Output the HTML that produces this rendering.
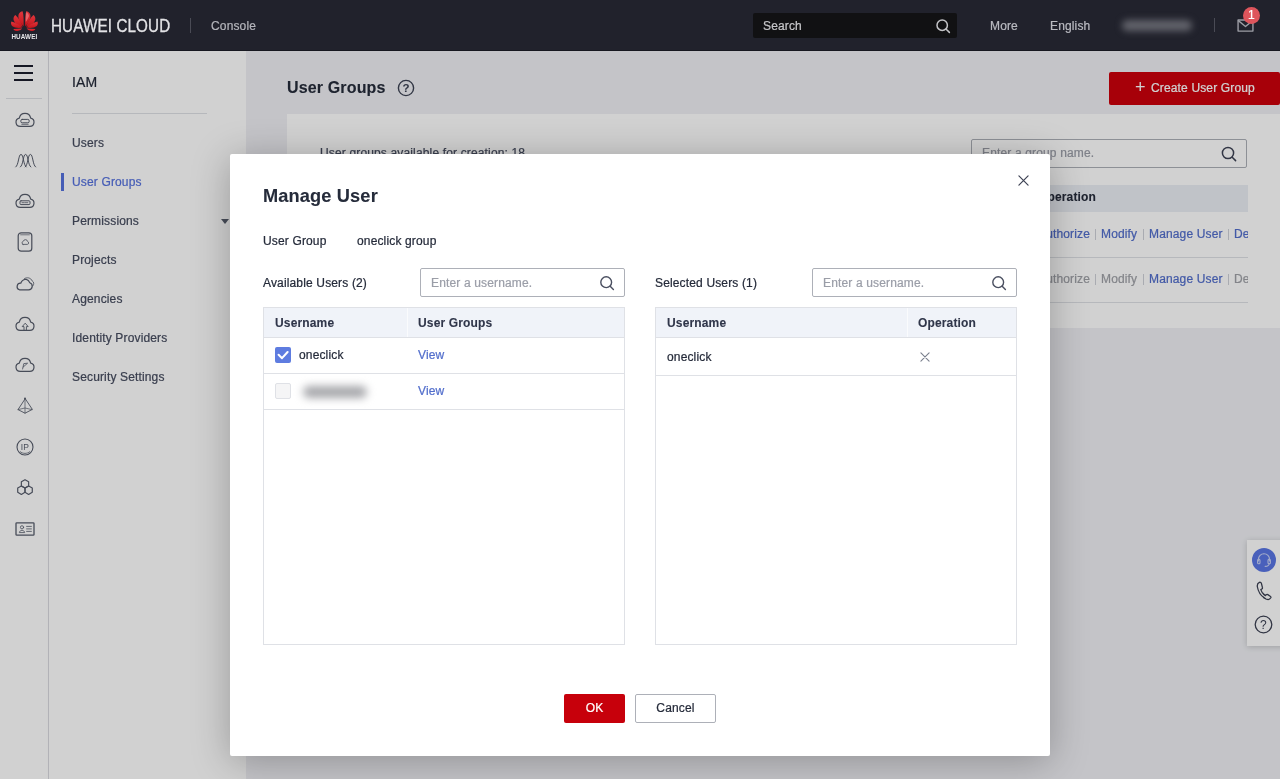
<!DOCTYPE html>
<html lang="en">
<head>
<meta charset="utf-8">
<title>IAM - User Groups</title>
<style>
*{box-sizing:border-box;margin:0;padding:0}
#rail,#side,#main,#modal,#topbar{-webkit-text-stroke:.22px currentColor}
b,h2,#ptitle{-webkit-text-stroke:.1px currentColor}
html,body{width:1280px;height:779px;overflow:hidden}
body{position:relative;font-family:"Liberation Sans",Arial,sans-serif;font-size:12px;letter-spacing:.15px;color:#252b3a;background:#eff0f4}
.abs{position:absolute}
/* ---------- top bar ---------- */
#topbar{position:absolute;left:0;top:0;width:1280px;height:51px;background:#21222c;z-index:80;border-bottom:1px solid #171820}
#topbar .brand{position:absolute;left:51px;top:16px;font-size:18px;line-height:20px;color:#e3e3e6;white-space:nowrap;transform-origin:0 50%;transform:scaleX(.845);-webkit-text-stroke:.3px #e3e3e6}
#topbar .vdiv{position:absolute;width:1px;background:#4a4b55}
#topbar .txt{position:absolute;font-size:12px;line-height:14px;color:#b9bac0}
#tsearch{position:absolute;left:753px;top:13px;width:204px;height:25px;background:#111113;border-radius:2px}
#tsearch span{position:absolute;left:10px;top:6px;font-size:12px;line-height:14px;color:#c6c6c9}
#tsearch svg{position:absolute;left:182px;top:5px}
.blur1{position:absolute;left:1122px;top:20px;width:70px;height:11px;border-radius:6px;background:#62636b;filter:blur(3.500px)}
#badge{position:absolute;left:1243px;top:7px;width:17px;height:17px;border-radius:9px;background:#de555c;color:#fff;font-size:12px;line-height:17px;text-align:center}
/* ---------- rail + sidebar ---------- */
#rail{position:absolute;left:0;top:50px;width:49px;height:729px;background:#fff;border-right:1px solid #dcdde3}
#rail .hb{position:absolute;left:14px;width:19px;height:2px;background:#1c1e2c}
#rail .sep{position:absolute;left:6px;top:48px;width:36px;height:1px;background:#dfe1e6}
#rail svg{position:absolute;left:13px;fill:none;stroke:#575d6c;stroke-width:1.2;stroke-linecap:round;stroke-linejoin:round}
#side{position:absolute;left:49px;top:50px;width:197px;height:729px;background:#fff;box-shadow:1px 0 3px rgba(0,0,0,.08)}
#side .ttl{position:absolute;left:23px;top:24px;font-size:14px;line-height:16px;color:#252b3a}
#side .sep{position:absolute;left:23px;top:63px;width:135px;height:1px;background:#dfe1e6}
#side .it{position:absolute;left:23px;font-size:12px;line-height:14px;color:#474d60}
#side .it.on{color:#5672de}
#side .bar{position:absolute;left:12px;top:123px;width:2.500px;height:18px;background:#5672de}
#side .caret{position:absolute;left:172px;top:169px;width:0;height:0;border-left:4px solid transparent;border-right:4px solid transparent;border-top:5px solid #575d6c}
/* ---------- main ---------- */
#main{position:absolute;left:246px;top:50px;width:1034px;height:729px;background:#eff0f4}
#ptitle{position:absolute;left:41px;top:28px;font-size:16px;font-weight:bold;line-height:20px;color:#252b3a}
#create{position:absolute;left:863px;top:21.500px;width:171px;height:33px;background:#cc000c;border-radius:2px;color:#fff;font-size:12px;line-height:33px;text-align:left}
#card{position:absolute;left:41px;top:64px;width:1000px;height:214px;background:#fff}
#card .note{position:absolute;left:33px;top:32px;font-size:12px;line-height:14px;color:#474d60;white-space:nowrap}
#gsearch{position:absolute;left:684px;top:25px;width:276px;height:28.500px;border:1px solid #adb0b8;border-radius:2px}
#gsearch span{position:absolute;left:10px;top:6px;font-size:12px;line-height:14px;color:#9b9ea8}
#gsearch svg{position:absolute;left:248px;top:4.500px}
#card .th{position:absolute;left:0;top:71px;width:961px;height:27px;background:#ebeef5}
#card .th b{position:absolute;left:751px;top:5px;font-size:12px;line-height:14px;color:#252b3a}
#card .row{position:absolute;left:0;width:961px;height:45px;border-bottom:1px solid #dfe1e6;font-size:12px;line-height:14px;white-space:nowrap}
#card .row span{position:absolute;top:15px}#card .row:last-of-type span{top:14px}#card .row i{position:absolute;top:17px;width:1px;height:11px;background:#cfd1d8}#card .row:last-of-type i{top:16px}
#card .lk{color:#526ecc}
#card .dis{color:#a0a2a8}
#card .sp{color:#c9cbd1}
#float{position:absolute;left:1001px;top:490px;width:40px;height:106px;background:#fff;box-shadow:0 1px 6px rgba(0,0,0,.18)}
#overlay{position:absolute;left:0;top:50px;width:1280px;height:729px;background:rgba(0,0,0,.18);z-index:60}
/* ---------- modal ---------- */
#modal{position:absolute;left:230px;top:154px;width:820px;height:602px;background:#fff;border-radius:2px;z-index:70;box-shadow:0 5px 38px rgba(0,0,0,.27)}
#modal>*{margin-top:-1px}
#modal,#side,#main,#topbar,#rail{will-change:transform}
#modal h2{position:absolute;left:33px;top:32px;font-size:18.200px;font-weight:bold;line-height:22px;color:#252b3a}
#modal .lb{position:absolute;font-size:12px;line-height:14px;color:#252b3a;white-space:nowrap}
#mclose{position:absolute;left:787.500px;top:21.500px}
.inp{position:absolute;top:115px;width:205px;height:29px;border:1px solid #adb0b8;border-radius:2px;background:#fff}
.inp span{position:absolute;left:10px;top:7px;font-size:12px;line-height:14px;color:#9b9ea8}
.inp svg{position:absolute;left:178px;top:6px}
.tbl{position:absolute;top:154px;width:362px;height:338px;border:1px solid #dfe1e6;background:#fff}
.tbl .hd{position:absolute;left:0;top:0;width:360px;height:30px;background:#f0f3f9;border-bottom:1px solid #dfe1e6}
.tbl .hd b{position:absolute;top:8px;font-size:12px;line-height:14px;color:#30364a}
.tbl .hd i{position:absolute;top:0;width:1px;height:29px;background:#fafbfd}
.tbl .r{position:absolute;left:0;width:360px;border-bottom:1px solid #dfe1e6}
.tbl .r span{position:absolute;font-size:12px;line-height:14px;color:#252b3a;white-space:nowrap}
.tbl .r .lk{color:#526ecc}
.cb{position:absolute;left:11px;width:16px;height:16px;border-radius:2px}
.cb.on{background:#5e7ce0}
.cb.off{background:#f5f5f6;border:1px solid #dfe1e6}
.blur2{position:absolute;left:39px;top:12px;width:64px;height:12px;border-radius:6px;background:#a6a7ab;filter:blur(4px)}
.btn{position:absolute;top:541px;height:29px;border-radius:2px;font-size:12px;line-height:29px;text-align:center}
#ok{left:334px;width:61px;background:#c7000b;color:#fff}
#cancel{left:405px;width:81px;background:#fff;border:1px solid #adb0b8;color:#252b3a;line-height:27px}
</style>
</head>
<body>
<!-- TOPBAR -->
<div id="topbar">
  <svg class="abs" style="left:0;top:0" width="48" height="48" viewBox="0 0 48 48">
    <defs><linearGradient id="lg" x1="0" y1="0" x2="0" y2="1"><stop offset="0" stop-color="#e2363c"/><stop offset="1" stop-color="#c4141c"/></linearGradient></defs>
    <g fill="url(#lg)"><path d="M23.6 26.2C23.8 20 23.600 14.5 22.600 11.200C19.500 11.600 17.600 14.600 18.600 18.400C19.400 21.200 21.400 23.800 23.600 26.200Z"/><path d="M22.800 26.800C21.400 22.600 18.600 18 15.400 15C12.800 16.800 12.800 20.600 15.600 23.200C17.600 25 20.200 26.200 22.800 26.800Z"/><path d="M22.400 27.600C19.600 25 15.400 22.600 11.400 21.600C10.200 24.200 11.800 26.800 15 27.600C17.400 28.200 20 28.200 22.400 27.600Z"/><path d="M22.200 28.500C19.400 28.600 16.200 28.700 13.400 29C14.200 30.800 16.400 31.400 18.600 30.800C20 30.400 21.200 29.600 22.200 28.500Z"/></g>
    <g fill="url(#lg)" transform="translate(48.8,0) scale(-1,1)"><path d="M23.6 26.2C23.8 20 23.600 14.5 22.600 11.200C19.500 11.600 17.600 14.600 18.600 18.400C19.400 21.200 21.400 23.800 23.600 26.200Z"/><path d="M22.800 26.800C21.400 22.600 18.600 18 15.400 15C12.800 16.800 12.800 20.600 15.600 23.200C17.600 25 20.200 26.200 22.800 26.800Z"/><path d="M22.400 27.600C19.600 25 15.400 22.600 11.400 21.600C10.200 24.200 11.800 26.800 15 27.600C17.400 28.200 20 28.200 22.400 27.600Z"/><path d="M22.200 28.500C19.400 28.600 16.200 28.700 13.400 29C14.200 30.800 16.400 31.400 18.600 30.800C20 30.400 21.200 29.600 22.200 28.500Z"/></g>
    <path d="M26.300 12.400C27.600 12.600 28.800 14 29 16C28.200 18.400 27 20.400 25.800 22C25.700 18.400 25.800 15 26.300 12.400Z" fill="#ee7a7c" opacity=".75"/>
    <text x="24.400" y="38.900" text-anchor="middle" font-family="Liberation Sans, Arial, sans-serif" font-weight="bold" font-size="7.200" fill="#e6e6e9" textLength="26" lengthAdjust="spacingAndGlyphs">HUAWEI</text>
  </svg>
  <div class="brand">HUAWEI CLOUD</div>
  <div class="vdiv" style="left:190px;top:18px;height:15px"></div>
  <div class="txt" style="left:211px;top:19px;color:#b4b5bb">Console</div>
  <div id="tsearch"><span>Search</span>
    <svg width="16" height="16" viewBox="0 0 16 16" fill="none" stroke="#c3c3c7" stroke-width="1.5" stroke-linecap="round"><circle cx="7.2" cy="7.2" r="5.2"/><path d="M11.2 11.2L14.4 14.4"/></svg>
  </div>
  <div class="txt" style="left:990px;top:19px">More</div>
  <div class="txt" style="left:1050px;top:19px">English</div>
  <div class="blur1"></div>
  <div class="vdiv" style="left:1214px;top:18px;height:14px"></div>
  <svg class="abs" style="left:1236.500px;top:19px" width="17" height="13" viewBox="0 0 18 14" fill="none" stroke="#9c9da4" stroke-width="1.5" stroke-linejoin="round"><rect x="1" y="1" width="16" height="12"/><path d="M1 1.5L9 8L17 1.5"/></svg>
  <div id="badge">1</div>
</div>

<!-- RAIL -->
<div id="rail">
  <div class="hb" style="top:15px"></div><div class="hb" style="top:22px"></div><div class="hb" style="top:29px"></div>
  <div class="sep"></div>
  <svg style="top:58px" width="24" height="24" viewBox="0 0 24 24"><path d="M7.2 18.4H16.8A4.2 4.2 0 0 0 17.7 10.1A5.8 5.8 0 0 0 6.3 10.1A4.2 4.2 0 0 0 7.2 18.4Z"/><rect x="7.800" y="11.400" width="8.400" height="3.400" rx="1.400" stroke-width="1"/><path d="M8.800 16.300H15.200" stroke-width="0.800"/></svg>
  <svg style="top:98px" width="24" height="24" viewBox="0 0 24 24"><path d="M2.8 19C5.8 17 5.4 6.400 8.0 6.400C10.6 6.400 10.2 17 13.2 19" stroke-width="1"/><path d="M7.4 19C10.4 17 10.0 6.400 12.6 6.400C15.2 6.400 14.8 17 17.8 19" stroke-width="1"/><path d="M12.2 19C15.2 17 14.8 6.400 17.4 6.400C20.0 6.400 19.6 17 22.6 19" stroke-width="1"/></svg>
  <svg style="top:139px" width="24" height="24" viewBox="0 0 24 24"><path d="M7.2 18.4H16.8A4.2 4.2 0 0 0 17.7 10.1A5.8 5.8 0 0 0 6.3 10.1A4.2 4.2 0 0 0 7.2 18.4Z"/><rect x="7" y="11.800" width="10" height="3.800" rx="1" stroke-width="1"/><path d="M9 13.700H15" stroke-width="0.800" stroke-dasharray="2.400 1"/></svg>
  <svg style="top:180px" width="24" height="24" viewBox="0 0 24 24"><rect x="5.200" y="2.800" width="13.600" height="18.400" rx="3"/><path d="M7.600 4.800H16.400" stroke-width="0.700"/><path d="M10 14.400H14.400A1.500 1.500 0 0 0 14.600 11.500A2.200 2.200 0 0 0 10.300 11.300A1.650 1.650 0 0 0 10 14.400Z" stroke-width="0.800"/></svg>
  <svg style="top:221px" width="24" height="24" viewBox="0 0 24 24"><path d="M6.400 18.800H15.600A3.600 3.600 0 0 0 16.800 11.800C15.200 7.800 11.600 7.400 9.200 9.800C8.600 10.400 8.200 11.200 7.800 12.200A3.400 3.400 0 0 0 6.400 18.800Z"/><path d="M11.400 7.600C14 5.800 18 6.800 19.200 10C21 10.800 21.400 13.200 19.800 15" stroke-width="0.800"/></svg>
  <svg style="top:262px" width="24" height="24" viewBox="0 0 24 24"><path d="M7.2 18.4H16.8A4.2 4.2 0 0 0 17.7 10.1A5.8 5.8 0 0 0 6.3 10.1A4.2 4.2 0 0 0 7.2 18.4Z"/><path d="M11 18.200V14.600H9.200L12.200 11.200L15.200 14.600H13.400V18.200" stroke-width="0.900"/></svg>
  <svg style="top:303px" width="24" height="24" viewBox="0 0 24 24"><path d="M7.2 18.4H16.8A4.2 4.2 0 0 0 17.7 10.1A5.8 5.8 0 0 0 6.3 10.1A4.2 4.2 0 0 0 7.2 18.4Z"/><path d="M9.600 16L10.800 10.600L14.600 10.200L10.200 14" stroke-width="0.800"/></svg>
  <svg style="top:344px" width="24" height="24" viewBox="0 0 24 24"><path d="M12 5L5 15.600L12 19.200L19 15.600Z" stroke-width="0.900"/><path d="M12 5V19.200M5 15.600L12 14L19 15.600" stroke-width="0.700"/><circle cx="12" cy="4.400" r="1" fill="#575d6c" stroke="none"/></svg>
  <svg style="top:385px" width="24" height="24" viewBox="0 0 24 24"><circle cx="12" cy="12" r="8" stroke-width="1.100"/><path d="M7.400 16.800C9.600 19 14.400 19 16.600 16.800" stroke-width="0.800"/><text x="12" y="15" text-anchor="middle" font-family="Liberation Sans, Arial, sans-serif" font-size="8.500" stroke="none" fill="#575d6c">IP</text></svg>
  <svg style="top:426px" width="24" height="24" viewBox="0 0 24 24"><path d="M12.00 3.70L15.64 5.80L15.64 10.00L12.00 12.10L8.36 10.00L8.36 5.80Z"/><path d="M8.36 10.00L12.00 12.10L12.00 16.30L8.36 18.40L4.72 16.30L4.72 12.10Z"/><path d="M15.64 10.00L19.28 12.10L19.28 16.30L15.64 18.40L12.00 16.30L12.00 12.10Z"/></svg>
  <svg style="top:467px" width="24" height="24" viewBox="0 0 24 24"><rect x="3" y="5.800" width="18" height="12.400" rx="0.800" stroke-width="1.300"/><circle cx="9" cy="10.300" r="1.600" stroke-width="0.800"/><path d="M6.400 15.200C6.600 12.600 11.400 12.600 11.600 15.200Z" stroke-width="0.800"/><path d="M13.600 9.400H18.400M13.600 11.900H18.400M13.600 14.400H18.400" stroke-width="0.800"/></svg>
</div>

<!-- SIDEBAR -->
<div id="side">
  <div class="ttl">IAM</div>
  <div class="sep"></div>
  <div class="it" style="top:86px">Users</div>
  <div class="bar"></div>
  <div class="it on" style="top:125px">User Groups</div>
  <div class="it" style="top:164px">Permissions</div>
  <div class="caret"></div>
  <div class="it" style="top:203px">Projects</div>
  <div class="it" style="top:242px">Agencies</div>
  <div class="it" style="top:281px">Identity Providers</div>
  <div class="it" style="top:320px">Security Settings</div>
</div>

<!-- MAIN -->
<div id="main">
  <div id="ptitle">User Groups</div>
  <svg class="abs" style="left:151.400px;top:28.800px" width="18" height="18" viewBox="0 0 18 18"><circle cx="9" cy="9" r="7.600" fill="none" stroke="#3d4254" stroke-width="1.400"/><text x="9" y="13.200" text-anchor="middle" font-family="Liberation Sans, Arial, sans-serif" font-size="11.500" font-weight="bold" fill="#3d4254">?</text></svg>
  <div id="create"><span style="position:absolute;left:26px;top:-1px;font-size:18px;font-weight:normal;-webkit-text-stroke:0">+</span><span style="position:absolute;left:42px;top:.500px">Create User Group</span></div>
  <div id="card">
    <div class="note">User groups available for creation: 18</div>
    <div id="gsearch"><span>Enter a group name.</span>
      <svg width="18" height="18" viewBox="0 0 18 18" fill="none" stroke="#3d4254" stroke-width="1.5" stroke-linecap="round"><circle cx="8" cy="8" r="5.6"/><path d="M12.2 12.2L15.6 15.6"/></svg>
    </div>
    <div class="th"><b>Operation</b></div>
    <div class="row" style="top:98px;height:46px">
      <span class="lk" style="left:751px">Authorize</span><i style="left:808px"></i>
      <span class="lk" style="left:814px">Modify</span><i style="left:856px"></i>
      <span class="lk" style="left:862px">Manage User</span><i style="left:941px"></i>
      <span class="lk" style="left:947px;width:14px;overflow:hidden">Delete</span>
    </div>
    <div class="row" style="top:144px;height:45px">
      <span class="dis" style="left:751px">Authorize</span><i style="left:808px"></i>
      <span class="dis" style="left:814px">Modify</span><i style="left:856px"></i>
      <span class="lk" style="left:862px">Manage User</span><i style="left:941px"></i>
      <span class="dis" style="left:947px;width:14px;overflow:hidden">Delete</span>
    </div>
  </div>
  <div id="float">
    <div class="abs" style="left:4.500px;top:7.500px;width:24.500px;height:24.500px;border-radius:13px;background:#5a76e4"></div>
    <svg class="abs" style="left:4.500px;top:8px" width="24" height="24" viewBox="0 0 24 24" fill="none" stroke="#c9d2f6" stroke-width="1.100" stroke-linecap="round"><path d="M6.4 13V11.4A5.6 5.6 0 0 1 17.6 11.400V13"/><rect x="5.6" y="11.4" width="2.4" height="4.4" rx="1"/><rect x="16" y="11.4" width="2.400" height="4.4" rx="1"/><path d="M17.2 15.8C17 17.6 15.400 18.400 13.200 18.400"/></svg>
    <svg class="abs" style="left:6.500px;top:39.500px" width="20" height="22" viewBox="0 0 20 22" fill="none" stroke="#3d4254" stroke-width="1.3" stroke-linecap="round" stroke-linejoin="round"><path d="M5.400 2.400C3.600 3.200 3 4.800 3.400 7C4.200 11.400 7.600 16.600 12 19C14 20 15.800 19.600 16.800 17.800C17.100 17.200 16.800 16.600 16.200 16.200L13.800 14.600C13.200 14.200 12.600 14.400 12.200 14.800L11.400 15.600C9.400 14.400 7.600 12 6.800 9.600L7.800 9C8.400 8.600 8.600 8 8.400 7.400L7.400 3.400C7.200 2.600 6.400 2 5.400 2.400Z"/></svg>
    <svg class="abs" style="left:7px;top:75px" width="19" height="19" viewBox="0 0 19 19"><circle cx="9.500" cy="9.500" r="8.300" fill="none" stroke="#3d4254" stroke-width="1.300"/><text x="9.500" y="13.800" text-anchor="middle" font-family="Liberation Sans, Arial, sans-serif" font-size="12" fill="#3d4254">?</text></svg>
  </div>
</div>

<div id="overlay"></div>

<!-- MODAL -->
<div id="modal">
  <h2>Manage User</h2>
  <svg id="mclose" width="11" height="11" viewBox="0 0 12 12" fill="none" stroke="#3d4254" stroke-width="1.3" stroke-linecap="round"><path d="M1 1L11 11M11 1L1 11"/></svg>
  <div class="lb" style="left:33px;top:81px">User Group</div>
  <div class="lb" style="left:127px;top:81px">oneclick group</div>

  <div class="lb" style="left:33px;top:123px">Available Users (2)</div>
  <div class="inp" style="left:190px"><span>Enter a username.</span>
    <svg width="16" height="16" viewBox="0 0 16 16" fill="none" stroke="#4a4f60" stroke-width="1.4" stroke-linecap="round"><circle cx="7.2" cy="7.2" r="5.4"/><path d="M11.2 11.2L14.4 14.4"/></svg>
  </div>
  <div class="tbl" style="left:33px">
    <div class="hd"><b style="left:11px">Username</b><i style="left:143px"></i><b style="left:154px">User Groups</b></div>
    <div class="r" style="top:30px;height:36px">
      <div class="cb on" style="top:9px"><svg width="16" height="16" viewBox="0 0 16 16" fill="none" stroke="#fff" stroke-width="2" stroke-linecap="round" stroke-linejoin="round"><path d="M3.6 7.8L7 11.2L12.6 5"/></svg></div>
      <span style="left:35px;top:10px">oneclick</span>
      <span class="lk" style="left:154px;top:10px">View</span>
    </div>
    <div class="r" style="top:66px;height:36px">
      <div class="cb off" style="top:9px"></div>
      <div class="blur2"></div>
      <span class="lk" style="left:154px;top:10px">View</span>
    </div>
  </div>

  <div class="lb" style="left:425px;top:123px">Selected Users (1)</div>
  <div class="inp" style="left:582px"><span>Enter a username.</span>
    <svg width="16" height="16" viewBox="0 0 16 16" fill="none" stroke="#4a4f60" stroke-width="1.4" stroke-linecap="round"><circle cx="7.2" cy="7.2" r="5.4"/><path d="M11.2 11.2L14.4 14.4"/></svg>
  </div>
  <div class="tbl" style="left:425px">
    <div class="hd"><b style="left:11px">Username</b><i style="left:251px"></i><b style="left:262px">Operation</b></div>
    <div class="r" style="top:30px;height:38px">
      <span style="left:11px;top:12px">oneclick</span>
      <svg class="abs" style="left:263.500px;top:13.500px" width="10" height="10" viewBox="0 0 11 11" fill="none" stroke="#7a7f8d" stroke-width="1.200" stroke-linecap="round"><path d="M1 1L10 10M10 1L1 10"/></svg>
    </div>
  </div>

  <div class="btn" id="ok">OK</div>
  <div class="btn" id="cancel">Cancel</div>
</div>
</body>
</html>
